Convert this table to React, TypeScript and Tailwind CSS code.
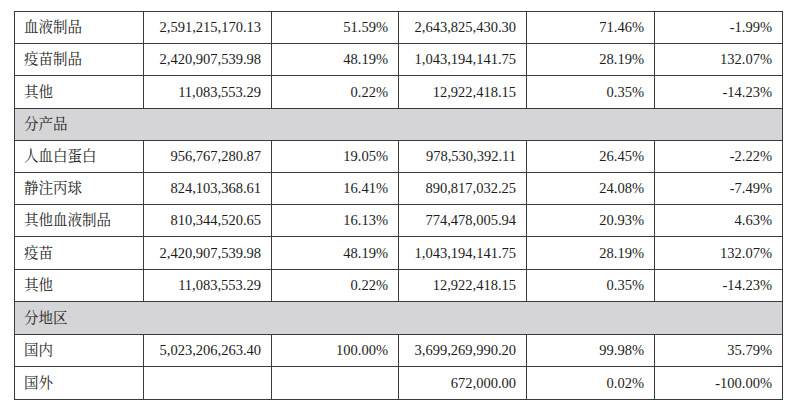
const cols = ["w-[129px]", "w-[128px]", "w-[127px]", "w-[128px]", "w-[128px]", "w-[128px]"];

type Row =
  | { kind: "data"; h: string; cells: string[] }
  | { kind: "group"; h: string; label: string };

const rows: Row[] = [
  { kind: "data", h: "h-[32px]", cells: ["血液制品", "2,591,215,170.13", "51.59%", "2,643,825,430.30", "71.46%", "-1.99%"] },
  { kind: "data", h: "h-[32px]", cells: ["疫苗制品", "2,420,907,539.98", "48.19%", "1,043,194,141.75", "28.19%", "132.07%"] },
  { kind: "data", h: "h-[33px]", cells: ["其他", "11,083,553.29", "0.22%", "12,922,418.15", "0.35%", "-14.23%"] },
  { kind: "group", h: "h-[32px]", label: "分产品" },
  { kind: "data", h: "h-[32px]", cells: ["人血白蛋白", "956,767,280.87", "19.05%", "978,530,392.11", "26.45%", "-2.22%"] },
  { kind: "data", h: "h-[32px]", cells: ["静注丙球", "824,103,368.61", "16.41%", "890,817,032.25", "24.08%", "-7.49%"] },
  { kind: "data", h: "h-[32px]", cells: ["其他血液制品", "810,344,520.65", "16.13%", "774,478,005.94", "20.93%", "4.63%"] },
  { kind: "data", h: "h-[33px]", cells: ["疫苗", "2,420,907,539.98", "48.19%", "1,043,194,141.75", "28.19%", "132.07%"] },
  { kind: "data", h: "h-[32px]", cells: ["其他", "11,083,553.29", "0.22%", "12,922,418.15", "0.35%", "-14.23%"] },
  { kind: "group", h: "h-[33px]", label: "分地区" },
  { kind: "data", h: "h-[32px]", cells: ["国内", "5,023,206,263.40", "100.00%", "3,699,269,990.20", "99.98%", "35.79%"] },
  { kind: "data", h: "h-[33px]", cells: ["国外", "", "", "672,000.00", "0.02%", "-100.00%"] },
];

export default function App() {
  return (
    <div className="w-[800px] h-[410px] bg-white pt-[11px] pl-[14px] text-[#1c1c1c] text-[14.5px] [font-family:'Liberation_Serif','Noto_Serif_CJK_SC','Noto_Sans_CJK_SC',serif]">
      <table className="table-fixed border-collapse w-[768px]">
        <colgroup>
          {cols.map((c, i) => (
            <col key={i} className={c} />
          ))}
        </colgroup>
        <tbody>
          {rows.map((r, i) =>
            r.kind === "group" ? (
              <tr key={i} className={r.h}>
                <td colSpan={6} className="border border-[#3a3a3a] bg-[#d5d5d7] px-[9px] p-0 leading-none">
                  {r.label}
                </td>
              </tr>
            ) : (
              <tr key={i} className={r.h}>
                {r.cells.map((c, j) => (
                  <td
                    key={j}
                    className={`border border-[#3a3a3a] p-0 leading-none ${
                      j === 0 ? "pl-[9px] text-left" : "pr-[10px] text-right"
                    }`}
                  >
                    {c}
                  </td>
                ))}
              </tr>
            )
          )}
        </tbody>
      </table>
    </div>
  );
}
